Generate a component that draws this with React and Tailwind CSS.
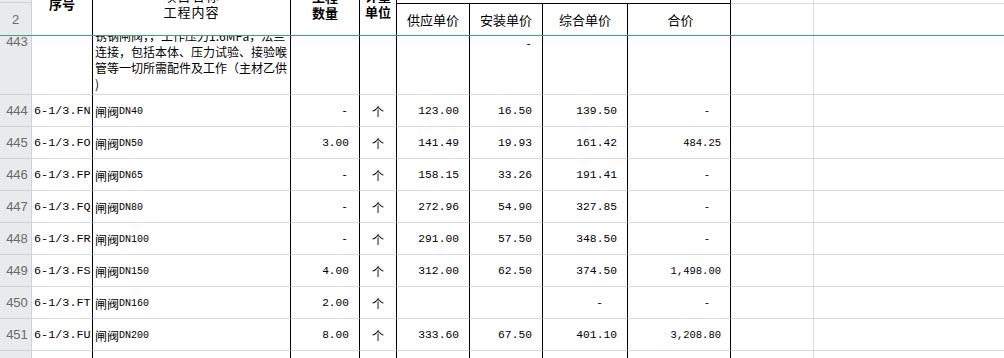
const cjk = "font-['Noto_Sans_CJK_SC',sans-serif]";
const mono = "font-['Liberation_Mono','Noto_Sans_CJK_SC',monospace]";
const rowNum = "font-['Liberation_Sans_Narrow','Liberation_Sans',sans-serif]";

const grid = 'grid grid-cols-[32px_61px_198px_69px_37px_73px_73px_85px_103px_83px_1fr]';

// cell edge styles
const hdr = 'border-r border-b border-[#cfd2d8] bg-[#e8eaed] text-[#6b6b6b] text-[13px] ' + rowNum;
const blk = 'border-r border-b border-r-black border-b-[#d9dbe1]';
const gry = 'border-r border-b border-[#d9dbe1]';

const rows = [
    { n: 444, code: 'FN', dn: 'DN40', qty: '-', sup: '123.00', ins: '16.50', tot: '139.50', sum: '-' },
    { n: 445, code: 'FO', dn: 'DN50', qty: '3.00', sup: '141.49', ins: '19.93', tot: '161.42', sum: '484.25' },
    { n: 446, code: 'FP', dn: 'DN65', qty: '-', sup: '158.15', ins: '33.26', tot: '191.41', sum: '-' },
    { n: 447, code: 'FQ', dn: 'DN80', qty: '-', sup: '272.96', ins: '54.90', tot: '327.85', sum: '-' },
    { n: 448, code: 'FR', dn: 'DN100', qty: '-', sup: '291.00', ins: '57.50', tot: '348.50', sum: '-' },
    { n: 449, code: 'FS', dn: 'DN150', qty: '4.00', sup: '312.00', ins: '62.50', tot: '374.50', sum: '1,498.00' },
    { n: 450, code: 'FT', dn: 'DN160', qty: '2.00', sup: '', ins: '', tot: '-', sum: '-' },
    { n: 451, code: 'FU', dn: 'DN200', qty: '8.00', sup: '333.60', ins: '67.50', tot: '401.10', sum: '3,208.80' },
];

const Num = ({ v, size, dashPad, pad }) => (
    <div className={`flex items-center justify-end pt-[2px] ${mono} ${size} ${v === '-' ? dashPad : pad}`}>
        {v}
    </div>
);

const DataRow = ({ r }) => (
    <div className={`${grid} h-[32px]`}>
        <div className={`${hdr} flex items-center justify-center pl-[3px] pt-[1px]`}>{r.n}</div>
        <div className={`${blk} flex items-center pl-[2px] pt-[2px] ${mono} text-[11.8px] whitespace-nowrap overflow-hidden`}>
            6-1/3.{r.code}
        </div>
        <div className={`${blk} flex items-center pl-[2px] pt-[2px] whitespace-nowrap`}>
            <span className={`${cjk} text-[12px]`}>闸阀</span>
            <span className={`${mono} text-[10px]`}>{r.dn}</span>
        </div>
        <div className={blk}>
            <Num v={r.qty} size="text-[11.2px] h-full" pad="pr-[10px]" dashPad="pr-[11px]" />
        </div>
        <div className={`${blk} flex items-center justify-center pt-[2px] ${cjk} text-[12px]`}>个</div>
        <div className={blk}>
            <Num v={r.sup} size="text-[11.3px] h-full" pad="pr-[10px]" dashPad="pr-[10px]" />
        </div>
        <div className={blk}>
            <Num v={r.ins} size="text-[11.3px] h-full" pad="pr-[10px]" dashPad="pr-[10px]" />
        </div>
        <div className={blk}>
            <Num v={r.tot} size="text-[11.3px] h-full" pad="pr-[10px]" dashPad="pr-[24px]" />
        </div>
        <div className={blk}>
            <Num v={r.sum} size="text-[10.5px] h-full" pad="pr-[9px]" dashPad="pr-[20px]" />
        </div>
        <div className={gry}></div>
        <div className="border-b border-[#d9dbe1]"></div>
    </div>
);

export default function App() {
    return (
        <div className="w-[1004px] h-[358px] overflow-hidden bg-white text-black">
            {/* frozen header row */}
            <div className={`${grid} h-[36px] border-b border-[#41a07a]`}>
                <div className="flex flex-col border-r border-[#cfd2d8] bg-[#e8eaed]">
                    <div className="h-[3px] border-b border-[#cfd2d8]"></div>
                    <div className={`flex-1 flex items-center justify-center text-[#6b6b6b] text-[13px] pt-[2px] ${rowNum}`}>2</div>
                </div>
                <div className="border-r border-black overflow-hidden">
                    <div className={`-mt-[4px] leading-[16px] text-center font-bold text-[13px] ${cjk}`}>序号</div>
                </div>
                <div className="border-r border-black overflow-hidden">
                    <div className={`-mt-[12px] leading-[16px] text-center text-[13px] tracking-[1px] ${cjk}`}>
                        <div>项目名称</div>
                        <div>工程内容</div>
                    </div>
                </div>
                <div className="border-r border-black overflow-hidden">
                    <div className={`-mt-[11px] leading-[16px] text-center font-bold text-[13px] ${cjk}`}>
                        <div>工程</div>
                        <div>数量</div>
                    </div>
                </div>
                <div className="border-r border-black overflow-hidden">
                    <div className={`-mt-[12px] leading-[16px] text-center font-bold text-[13px] ${cjk}`}>
                        <div>计量</div>
                        <div>单位</div>
                    </div>
                </div>
                <div className="col-span-4 flex flex-col border-r border-black">
                    <div className="h-[4px] border-b border-black"></div>
                    <div className={`flex-1 grid grid-cols-[73px_73px_85px_1fr] text-[13px] ${cjk}`}>
                        <div className="border-r border-black flex items-center justify-center pt-[1px]">供应单价</div>
                        <div className="border-r border-black flex items-center justify-center pt-[1px]">安装单价</div>
                        <div className="border-r border-black flex items-center justify-center pt-[1px]">综合单价</div>
                        <div className="flex items-center justify-center pt-[1px] pl-[3px]">合价</div>
                    </div>
                </div>
                <div className="flex flex-col border-r border-[#d9dbe1]">
                    <div className="h-[4px] border-b border-[#d9dbe1]"></div>
                </div>
                <div className="flex flex-col">
                    <div className="h-[4px] border-b border-[#d9dbe1]"></div>
                </div>
            </div>

            {/* row 443, scrolled partly under the freeze line */}
            <div className={`${grid} h-[59px]`}>
                <div className={`${hdr} flex justify-center pl-[3px]`}>
                    <div className="leading-[14px] -mt-[1px]">443</div>
                </div>
                <div className={blk}></div>
                <div className={`${blk} overflow-hidden`}>
                    <div className={`-mt-[8px] pl-[2px] leading-[16px] text-[12px] whitespace-nowrap ${cjk}`}>
                        <div>锈钢闸阀，，工作压力1.6MPa，法兰</div>
                        <div>连接，包括本体、压力试验、接验喉</div>
                        <div>管等一切所需配件及工作（主材乙供</div>
                        <div>)</div>
                    </div>
                </div>
                <div className={blk}></div>
                <div className={blk}></div>
                <div className={blk}></div>
                <div className={`${blk} flex justify-end pr-[10px] ${mono} text-[11.3px]`}>
                    <div className="leading-[14px] mt-px">-</div>
                </div>
                <div className={blk}></div>
                <div className={blk}></div>
                <div className={gry}></div>
                <div className="border-b border-[#d9dbe1]"></div>
            </div>

            {rows.map((r) => (
                <DataRow key={r.n} r={r} />
            ))}

            {/* next row, cut by the window */}
            <div className={`${grid} h-[32px]`}>
                <div className={`${hdr} flex items-center justify-center pl-[3px]`}>452</div>
                <div className={blk}></div>
                <div className={blk}></div>
                <div className={blk}></div>
                <div className={blk}></div>
                <div className={blk}></div>
                <div className={blk}></div>
                <div className={blk}></div>
                <div className={blk}></div>
                <div className={gry}></div>
                <div className="border-b border-[#d9dbe1]"></div>
            </div>
        </div>
    );
}
